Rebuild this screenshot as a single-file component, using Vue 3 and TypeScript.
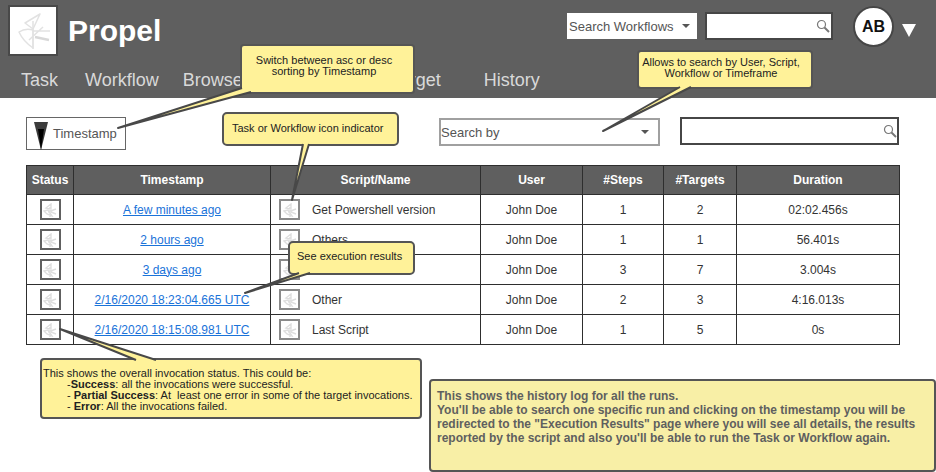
<script setup lang="ts">
interface Run {
  time: string
  name: string
  user: string
  steps: number
  targets: number
  duration: string
}

const navItems = [
  { label: 'Task', cls: 'nav-task' },
  { label: 'Workflow', cls: 'nav-workflow' },
  { label: 'Browse', cls: 'nav-browse' },
  { label: 'Target', cls: 'nav-target' },
  { label: 'History', cls: 'nav-history' },
]

const runs: Run[] = [
  { time: 'A few minutes ago', name: 'Get Powershell version', user: 'John Doe', steps: 1, targets: 2, duration: '02:02.456s' },
  { time: '2 hours ago', name: 'Others', user: 'John Doe', steps: 1, targets: 1, duration: '56.401s' },
  { time: '3 days ago', name: 'Other', user: 'John Doe', steps: 3, targets: 7, duration: '3.004s' },
  { time: '2/16/2020 18:23:04.665 UTC', name: 'Other', user: 'John Doe', steps: 2, targets: 3, duration: '4:16.013s' },
  { time: '2/16/2020 18:15:08.981 UTC', name: 'Last Script', user: 'John Doe', steps: 1, targets: 5, duration: '0s' },
]

// callout tails in page coordinates: two base points inside the note, then the tip
const tails = [
  { a: '242,88', b: '251,92', tip: '118,128' },
  { a: '303,144', b: '309,144', tip: '292,200' },
  { a: '680,87', b: '691,87', tip: '603,131' },
  { a: '299,273', b: '310,273', tip: '245,293' },
  { a: '136,360', b: '156,360', tip: '60,329' },
]
</script>

<template>
  <div class="page">
    <header class="topbar">
      <div class="brand-row">
        <div class="logo">
          <svg width="36" height="40" viewBox="0 0 36 40" fill="none" stroke="#e2e2e2" stroke-width="1.5" stroke-linejoin="round">
            <path d="M10 12 L25 3 L18 18 L10 12 Z" />
            <path d="M4 21 Q10 17 18 19 L18 37 Q8 30 4 21 Z" />
            <path d="M18 10 L18 38 M18 20 L35 20 M14 29 L28 16" />
            <path d="M20 26 L34 29" stroke-width="2.4" stroke="#d8d8d8" />
          </svg>
        </div>
        <div class="title">Propel</div>
        <div class="top-search">
          <div class="top-select">
            <span>Search Workflows</span>
            <i class="caret"></i>
          </div>
          <div class="top-input">
            <svg class="lens" width="14" height="14" viewBox="0 0 14 14" fill="none" stroke="#777">
              <circle cx="5.5" cy="5.5" r="4" stroke-width="1.2" />
              <path d="M8.5 8.5 L13 13" stroke-width="2" />
            </svg>
          </div>
          <div class="avatar">AB</div>
          <i class="user-arrow"></i>
        </div>
      </div>
      <nav class="nav">
        <span v-for="item in navItems" :key="item.label" :class="item.cls">{{ item.label }}</span>
      </nav>
    </header>

    <section class="toolbar">
      <div class="sort-btn">
        <svg class="sort-arrow" width="14" height="28" viewBox="0 0 14 28">
          <polygon points="0,0 14,0 7,28" fill="#3c3c3c" />
          <polygon points="4,7 10,7 7,28" fill="#000" />
        </svg>
        <span>Timestamp</span>
      </div>
      <div class="search-by">
        <span>Search by</span>
        <i class="caret"></i>
      </div>
      <div class="search-box">
        <svg class="lens" width="14" height="14" viewBox="0 0 14 14" fill="none" stroke="#777">
          <circle cx="5.5" cy="5.5" r="4" stroke-width="1.2" />
          <path d="M8.5 8.5 L13 13" stroke-width="2" />
        </svg>
      </div>
    </section>

    <table class="runs">
      <thead>
        <tr>
          <th class="c-status">Status</th>
          <th class="c-time">Timestamp</th>
          <th class="c-name">Script/Name</th>
          <th class="c-user">User</th>
          <th class="c-steps">#Steps</th>
          <th class="c-targets">#Targets</th>
          <th>Duration</th>
        </tr>
      </thead>
      <tbody>
        <tr v-for="run in runs" :key="run.time">
          <td>
            <span class="icon-box dark">
              <svg width="14" height="14" viewBox="0 0 14 14" fill="none" stroke="#dedede" stroke-width="1.4">
                <path d="M3 5 L8 1 L8 6 Z M1 8 L5 7 L9 13 L4 11 Z M7 4 L7 14 M5 9 L13 6 M8 9 L13 11" />
              </svg>
            </span>
          </td>
          <td><a class="time-link" href="#">{{ run.time }}</a></td>
          <td class="name-cell">
            <span class="icon-box">
              <svg width="14" height="14" viewBox="0 0 14 14" fill="none" stroke="#dedede" stroke-width="1.4">
                <path d="M3 5 L8 1 L8 6 Z M1 8 L5 7 L9 13 L4 11 Z M7 4 L7 14 M5 9 L13 6 M8 9 L13 11" />
              </svg>
            </span>
            <span>{{ run.name }}</span>
          </td>
          <td>{{ run.user }}</td>
          <td>{{ run.steps }}</td>
          <td>{{ run.targets }}</td>
          <td>{{ run.duration }}</td>
        </tr>
      </tbody>
    </table>

    <!-- annotation layer: sticky notes over the wireframe -->
    <div class="note note-sort">Switch between asc or desc<br />sorting by Timestamp</div>
    <div class="note note-icon">Task or Workflow icon indicator</div>
    <div class="note note-search">Allows to search by User, Script,<br />Workflow or Timeframe</div>
    <div class="note note-results">See execution results</div>
    <div class="note note-status">
      This shows the overall invocation status. This could be:<br />
      <span class="ind">-<b>Success</b>: all the invocations were successful.</span><br />
      <span class="ind">- <b>Partial Success</b>: At&nbsp; least one error in some of the target invocations.</span><br />
      <span class="ind">- <b>Error</b>: All the invocations failed.</span>
    </div>
    <div class="note note-history">
      This shows the history log for all the runs.<br />
      You'll be able to search one specific run and clicking on the timestamp you will be<br />
      redirected to the "Execution Results" page where you will see all details, the results<br />
      reported by the script and also you'll be able to run the Task or Workflow again.
    </div>
    <svg class="tails" width="936" height="472">
      <g v-for="t in tails" :key="t.tip">
        <polygon :points="`${t.a} ${t.b} ${t.tip}`" fill="#fff299" />
        <polyline :points="`${t.a} ${t.tip} ${t.b}`" fill="none" stroke="#484848" stroke-width="2" stroke-linejoin="round" />
      </g>
    </svg>
  </div>
</template>

<style>
body {
  background: #fff;
}
</style>

<style scoped>
.page {
  position: relative;
  width: 936px;
  height: 472px;
  overflow: hidden;
  background: #fff;
  font-family: 'Liberation Sans', Arial, sans-serif;
  color: #333;
}

.topbar {
  height: 98px;
  box-sizing: border-box;
  padding: 5px 20px 0 8px;
  background: #5f5f5f;
}

.brand-row {
  display: flex;
  align-items: flex-start;
  height: 51px;
}

.logo {
  display: flex;
  align-items: center;
  justify-content: center;
  width: 50px;
  height: 51px;
  box-sizing: border-box;
  border: 2px solid #494949;
  background: #fff;
}

.title {
  margin: 8px 0 0 10px;
  font-size: 30px;
  line-height: 36px;
  font-weight: 700;
  color: #fff;
}

.top-search {
  display: flex;
  align-items: flex-start;
  margin-left: auto;
}

.top-select {
  display: flex;
  align-items: center;
  justify-content: space-between;
  width: 130px;
  height: 26px;
  margin-top: 8px;
  padding: 0 7px 0 2px;
  box-sizing: border-box;
  background: #fff;
  font-size: 13px;
  color: #555;
}

.caret {
  width: 0;
  height: 0;
  border-left: 4px solid transparent;
  border-right: 4px solid transparent;
  border-top: 4px solid #555;
}

.top-input {
  display: flex;
  align-items: center;
  justify-content: flex-end;
  width: 128px;
  height: 28px;
  margin: 7px 0 0 8px;
  padding-right: 1px;
  box-sizing: border-box;
  border: 2px solid #464646;
  background: #fff;
}

.avatar {
  display: flex;
  align-items: center;
  justify-content: center;
  width: 41px;
  height: 41px;
  margin: 1px 0 0 20px;
  box-sizing: border-box;
  border: 2px solid #464646;
  border-radius: 50%;
  background: #fff;
  font-size: 16px;
  font-weight: 700;
  color: #111;
}

.user-arrow {
  width: 0;
  height: 0;
  margin: 19px 0 0 8px;
  border-left: 7.5px solid transparent;
  border-right: 7.5px solid transparent;
  border-top: 13px solid #fff;
}

.nav {
  display: flex;
  margin-top: 13px;
  padding-left: 13px;
  font-size: 18px;
  line-height: 22px;
  color: #d9d9d9;
}

.nav-workflow { margin-left: 27px; }
.nav-browse { margin-left: 24px; }
.nav-target { margin-left: 148px; }
.nav-history { margin-left: 43px; }

.toolbar {
  display: flex;
  align-items: flex-start;
  padding: 19px 0 0 26px;
  height: 67px;
  box-sizing: border-box;
}

.sort-btn {
  display: flex;
  align-items: center;
  gap: 5px;
  width: 100px;
  height: 33px;
  padding-left: 7px;
  box-sizing: border-box;
  border: 1px solid #666;
  font-size: 13px;
  color: #555;
}

.sort-arrow {
  flex: none;
  margin-top: 5px;
}

.search-by {
  display: flex;
  align-items: center;
  justify-content: space-between;
  width: 221px;
  height: 28px;
  margin: 1px 0 0 313px;
  padding: 0 9px 0 0;
  box-sizing: border-box;
  border: 2px solid #a0a0a0;
  font-size: 13px;
  color: #555;
}

.search-box {
  display: flex;
  align-items: center;
  justify-content: flex-end;
  width: 219px;
  height: 28px;
  margin-left: 20px;
  box-sizing: border-box;
  border: 2px solid #464646;
}

.runs {
  width: 874px;
  margin-left: 26px;
  border-collapse: collapse;
  table-layout: fixed;
  font-size: 12px;
  color: #333;
}

.runs th,
.runs td {
  padding: 0;
  border: 1px solid #2e2e2e;
  text-align: center;
}

.runs th {
  height: 28px;
  background: #5f5f5f;
  font-weight: 700;
  color: #fff;
}

.runs td {
  height: 29px;
}

.c-status { width: 46px; }
.c-time { width: 196px; }
.c-name { width: 209px; }
.c-user { width: 101px; }
.c-steps { width: 80px; }
.c-targets { width: 72px; }

.time-link {
  color: #1a73d9;
  text-decoration: underline;
}

.runs td.name-cell {
  padding-left: 8px;
  text-align: left;
}

.name-cell > span:last-child {
  margin-left: 12px;
  vertical-align: middle;
}

.icon-box {
  display: inline-flex;
  align-items: center;
  justify-content: center;
  width: 21px;
  height: 21px;
  box-sizing: border-box;
  border: 2px solid #8a8a8a;
  vertical-align: middle;
}

.icon-box.dark {
  border-color: #606060;
}

.tails {
  position: absolute;
  top: 0;
  left: 0;
  pointer-events: none;
}

.note {
  position: absolute;
  box-sizing: border-box;
  border: 2px solid #555;
  border-radius: 4px;
  background: #fff299;
  font-size: 11px;
  line-height: 11px;
  color: #222;
}

.note-sort {
  top: 44px;
  left: 240px;
  width: 175px;
  height: 50px;
  padding: 9px 7px 0 0;
  text-align: center;
}

.note-icon {
  top: 112px;
  left: 222px;
  width: 177px;
  height: 34px;
  padding: 9px 0 0 8px;
  border-radius: 5px;
}

.note-search {
  top: 50px;
  left: 637px;
  width: 176px;
  height: 39px;
  padding: 5px 8px 0 0;
  text-align: center;
}

.note-results {
  top: 241px;
  left: 288px;
  width: 127px;
  height: 34px;
  padding: 8px 0 0 7px;
  border-radius: 5px;
}

.note-status {
  top: 358px;
  left: 40px;
  width: 382px;
  height: 61px;
  padding: 8px 0 0 1px;
}

.ind {
  padding-left: 24px;
}

.note-history {
  top: 379px;
  left: 429px;
  width: 507px;
  height: 93px;
  padding: 8px 0 0 6px;
  background: #f8efa6;
  font-size: 12px;
  font-weight: 700;
  line-height: 14px;
  color: #5f5f5f;
}
</style>
